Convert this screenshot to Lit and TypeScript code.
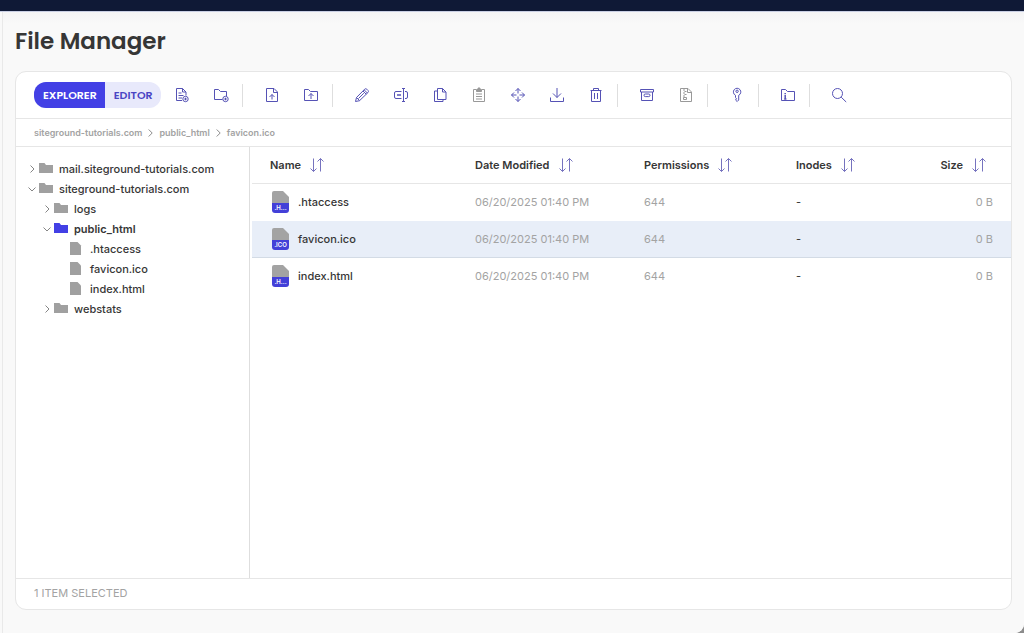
import { LitElement, html, svg, css, nothing } from "lit";
import { customElement, property, state } from "lit/decorators.js";
import { classMap } from "lit/directives/class-map.js";

const PAGE = "M2.500 1.500h7.500l3.500 3.500v9.500h-11zM9.500 1.500v4h4";
const FOLDER = "M1.500 13.500v-11h4l2 2h7v9z";

const ICONS: Record<string, unknown> = {
  newFile: svg`<path d="M8 13.500H2.500v-12h6L12 5v3.500M8.500 1.500V5H12M4.500 6h3M4.500 8.500h5M4.500 11H8"/><circle cx="11.500" cy="12" r="2.700"/><path d="M11.500 10.700v2.600M10.200 12h2.600"/>`,
  newFolder: svg`<path d="M9.500 12.500H1.500v-10h4l2 2h6V9"/><circle cx="12.500" cy="12" r="2.700"/><path d="M12.500 10.700v2.600M11.200 12h2.600"/>`,
  uploadFile: svg`<path d=${PAGE}/><path d="M8 12.500V7.500M5.500 10L8 7.500l2.500 2.500"/>`,
  uploadFolder: svg`<path d=${FOLDER}/><path d="M8 12V6.500M5.500 9L8 6.500 10.500 9"/>`,
  edit: svg`<path d="M1.500 14.500l1-4 8.200-8.300a1.500 1.500 0 0 1 2.100 0l1.200 1.200a1.500 1.500 0 0 1 0 2.100L5.500 13.700zM2.500 10.500l3 3M9 4l3.200 3.200M10.200 2.900l3.100 3.100M4.500 11.500l5.300-5.300"/>`,
  rename: svg`<path d="M8.500 4.500H3A1.500 1.500 0 0 0 1.500 6v4A1.500 1.500 0 0 0 3 11.500h5.500M12 4.500h1A1.500 1.500 0 0 1 14.500 6v4a1.500 1.500 0 0 1-1.500 1.500h-1M10.500 2v12M9 1.500h3M9 14.500h3"/><path stroke-width="1.500" d="M4 8h4"/>`,
  copy: svg`<path d="M5.500 1.500h5l3.500 3.500v7.500H5.500zM10.500 1.500V5H14M5.500 4H2.500v10.500h8.500v-2"/>`,
  paste: svg`<path d="M5 2.500H2.500v12h11v-12H11M5 7h6M5 9.500h6M5 12h6"/><path fill="currentColor" d="M5.500 2.500h1.500V1h2v1.500h1.500v2h-5z"/>`,
  move: svg`<path d="M8 1.500v5M8 9.500v5M1.500 8h5M9.500 8h5M5.500 4L8 1.500 10.500 4M5.500 12L8 14.500l2.500-2.500M4 5.500L1.500 8 4 10.500M12 5.500L14.500 8 12 10.500"/>`,
  download: svg`<path d="M8 1v9.500M4 6.500l4 4 4-4M1.500 10.500v4h13v-4"/>`,
  trash: svg`<path d="M2.500 3.500h11M5.500 3.500v-2h5v2M3.500 3.500v11h9v-11M6.500 6v6M9.500 6v6"/>`,
  archive: svg`<path d="M1.500 2.500h13V5h-13zM2.500 5v8.500h11V5"/><rect x="5" y="7" width="6" height="2.600" rx="1.300"/>`,
  extract: svg`<path d=${PAGE}/><path d="M5 3h2M6.500 4.500h2M5 6h2M6.500 7.500h2M5 9h2M5.500 10.500h3v2h-3z"/>`,
  key: svg`<path d="M6.500 8.300a3.700 3.700 0 1 1 3.200 0V13l-1.500 1.500-1.700-1.500 1-1.200-1-1.300z"/><circle cx="8.100" cy="4.300" r="1.200"/>`,
  info: svg`<path d=${FOLDER}/><path stroke-width="1.500" d="M5.200 6v1.200M5.200 8v4M4.200 12h2.200"/>`,
  search: svg`<circle cx="6.500" cy="6.500" r="5"/><path d="M10.200 10.200l5 4.800"/>`,
};

interface Tool { icon: string; label: string; off?: boolean; }

const TOOLS: Tool[][] = [
  [{ icon: "newFile", label: "New File" }, { icon: "newFolder", label: "New Folder" }],
  [{ icon: "uploadFile", label: "File Upload" }, { icon: "uploadFolder", label: "Folder Upload" }],
  [
    { icon: "edit", label: "Edit" },
    { icon: "rename", label: "Rename" },
    { icon: "copy", label: "Copy" },
    { icon: "paste", label: "Paste", off: true },
    { icon: "move", label: "Move" },
    { icon: "download", label: "Download" },
    { icon: "trash", label: "Delete" },
  ],
  [{ icon: "archive", label: "Archive" }, { icon: "extract", label: "Extract", off: true }],
  [{ icon: "key", label: "Change Permissions" }],
  [{ icon: "info", label: "Directory Info" }],
  [{ icon: "search", label: "Search" }],
];

@customElement("fm-toolbar")
export class FmToolbar extends LitElement {
  @state() private mode = "Explorer";

  static styles = css`
    :host { display: flex; align-items: center; height: 46px; padding-left: 18px; border-bottom: 1px solid #e6e6e6; }
    .modes { display: flex; border-radius: 12px; overflow: hidden; background: #e8e9fb; }
    .mode {
      border: 0; margin: 0; padding: 0 8px 0 9px; height: 26px; background: none; color: #4a45c4;
      font: 600 11px/24px Poppins, Inter, sans-serif; text-transform: uppercase; cursor: pointer;
    }
    .active { background: #4340e5; color: #fff; }
    .group { display: flex; align-items: center; gap: 19px; height: 23px; padding: 0 11px 0 19px; border-left: 1px solid #dedede; }
    .group:nth-of-type(2) { border-left: 0; padding-left: 11px; }
    .tool { display: grid; place-items: center; width: 20px; height: 20px; padding: 0; border: 0; background: none; color: #5552b5; cursor: pointer; }
    .tool:disabled { color: #999; cursor: default; }
    .glyph { width: 16px; height: 16px; fill: none; stroke: currentColor; }
  `;

  render() {
    return html`
      <div class="modes">
        ${["Explorer", "Editor"].map((m) => html`
          <button class=${classMap({ mode: true, active: this.mode === m })} @click=${() => (this.mode = m)}>${m}</button>`)}
      </div>
      ${TOOLS.map((group) => html`
        <div class="group">
          ${group.map((t) => html`
            <button class="tool" aria-label=${t.label} ?disabled=${!!t.off}>
              <svg class="glyph" viewBox="0 0 16 16" aria-hidden="true">${ICONS[t.icon]}</svg>
            </button>`)}
        </div>`)}
    `;
  }
}

interface Node { name: string; depth: number; kind: "folder" | "file"; open?: boolean; current?: boolean; }

const NODES: Node[] = [
  { name: "mail.siteground-tutorials.com", depth: 0, kind: "folder" },
  { name: "siteground-tutorials.com", depth: 0, kind: "folder", open: true },
  { name: "logs", depth: 1, kind: "folder" },
  { name: "public_html", depth: 1, kind: "folder", open: true, current: true },
  { name: ".htaccess", depth: 2, kind: "file" },
  { name: "favicon.ico", depth: 2, kind: "file" },
  { name: "index.html", depth: 2, kind: "file" },
  { name: "webstats", depth: 1, kind: "folder" },
];

@customElement("fm-tree")
export class FmTree extends LitElement {
  static styles = css`
    :host { display: block; border-right: 1px solid #dedede; }
    .list { list-style: none; margin: 0; padding: 12px 0 0 12px; }
    .depth1 { padding-left: 15px; }
    .depth2 { padding-left: 31px; }
    .node {
      display: flex; align-items: center; height: 20px; padding: 0; border: 0; background: none;
      font: 500 11px/20px Inter, sans-serif; color: #363636; white-space: nowrap; cursor: pointer;
    }
    .current { font-weight: 600; }
    .chevron { width: 8px; height: 8px; margin-right: 3px; fill: none; stroke: #858585; }
    .icon { width: 14px; height: 14px; margin-right: 6px; fill: #a0a0a0; }
    .current .icon { fill: #4340e5; }
  `;

  render() {
    return html`
      <ul class="list">
        ${NODES.map((n) => html`
          <li class="depth${n.depth}">
            <button class=${classMap({ node: true, current: !!n.current })}>
              <svg class="chevron" viewBox="0 0 8 8" aria-hidden="true">
                ${n.kind === "file" ? nothing : n.open
                  ? svg`<path d="M0.500 2.500L4 6l3.500-3.500"/>`
                  : svg`<path d="M2.500 0.500L6 4 2.500 7.500"/>`}
              </svg>
              <svg class="icon" viewBox="0 0 14 14" aria-hidden="true">
                ${n.kind === "file"
                  ? svg`<path d="M0 0h7.500L11 3.500V13H0z"/>`
                  : svg`<path d="M0 11V1h5.500l1.500 2h7v8z"/>`}
              </svg>
              <span>${n.name}</span>
            </button>
          </li>`)}
      </ul>
    `;
  }
}

interface Entry { name: string; badge: string; }

const ENTRIES: Entry[] = [
  { name: ".htaccess", badge: ".H..." },
  { name: "favicon.ico", badge: ".ICO" },
  { name: "index.html", badge: ".H..." },
];

const COLUMNS = ["Name", "Date Modified", "Permissions", "Inodes", "Size"];

@customElement("fm-files")
export class FmFiles extends LitElement {
  @property() selected = "favicon.ico";

  static styles = css`
    :host { display: block; padding-left: 2px; }
    .table { width: 100%; table-layout: fixed; border-collapse: separate; border-spacing: 0; font: 400 11px/16px Inter, sans-serif; }
    .col-name { width: 205px; }
    .col-date { width: 169px; }
    .col-perm { width: 152px; }
    .col-inodes { width: 110px; }
    .col-size { width: 123px; }
    th, td { height: 36px; padding: 0 0 0 18px; text-align: left; white-space: nowrap; border-bottom: 1px solid transparent; }
    th { height: 34px; padding-bottom: 2px; border-bottom-color: #e6e6e6; }
    th:last-child, td:last-child { text-align: right; padding-left: 0; padding-right: 18px; }
    td { color: #a3a3a3; }
    .sort { display: inline-flex; align-items: center; gap: 2px; padding: 0; border: 0; background: none; font: 600 11px/16px Inter, sans-serif; color: #363636; cursor: pointer; vertical-align: middle; }
    .arrows { width: 28px; height: 14px; fill: none; stroke: #7673bf; }
    .selected td { background: #e8eef8; border-bottom-color: #d3dbe5; }
    .name { display: flex; align-items: center; gap: 9px; padding-left: 2px; font-weight: 500; color: #363636; }
    .dash { color: #363636; }
    .badge {
      display: flex; align-items: flex-end; justify-content: center; width: 17px; height: 22px; border-radius: 2px 0 3px 3px;
      background: linear-gradient(#a3a3a3 12px, #4340d8 12px); clip-path: polygon(0 0, 11px 0, 100% 6px, 100% 100%, 0 100%);
      font: 600 6px/10px Inter, sans-serif; color: #fff;
    }
  `;

  render() {
    return html`
      <table class="table">
        <colgroup>
          <col class="col-name" /><col class="col-date" /><col class="col-perm" /><col class="col-inodes" /><col class="col-size" />
        </colgroup>
        <thead>
          <tr>
            ${COLUMNS.map((c) => html`
              <th scope="col">
                <button class="sort">${c}
                  <svg class="arrows" viewBox="0 0 28 14" aria-hidden="true">
                    <path d="M10.500 0.500v13M7.500 10.500l3 3 3-3M17.500 13.500V0.500M14.500 3.500l3-3 3 3" />
                  </svg>
                </button>
              </th>`)}
          </tr>
        </thead>
        <tbody>
          ${ENTRIES.map((e) => html`
            <tr class=${classMap({ selected: e.name === this.selected })} @click=${() => (this.selected = e.name)}>
              <td><div class="name"><span class="badge">${e.badge}</span>${e.name}</div></td>
              <td>06/20/2025 01:40 PM</td>
              <td>644</td>
              <td><span class="dash">-</span></td>
              <td>0 B</td>
            </tr>`)}
        </tbody>
      </table>
    `;
  }
}

@customElement("app-root")
export class AppRoot extends LitElement {
  static styles = css`
    :host { display: flex; height: 100vh; background: #8c8c8c; font-family: Inter, sans-serif; color: #363636; }
    .shell { flex: 1; display: flex; flex-direction: column; min-width: 0; overflow: hidden; border-radius: 0 0 9px 0; background: #f9f9f9; }
    .topbar { height: 11px; background: #0f1936; border-bottom: 1px solid #c9cfe4; }
    .page {
      flex: 1; display: flex; flex-direction: column; min-height: 0; margin-left: 2px; padding: 12px 12px 23px;
      border-left: 1px solid #e9e9e9; background: linear-gradient(#f4f4f5, #f9f9f9 12px);
    }
    .title { margin: 0 0 13px; font: 600 23px/34px Poppins, Inter, sans-serif; }
    .card { flex: 1; display: flex; flex-direction: column; min-height: 0; overflow: hidden; border: 1px solid #e6e6e6; border-radius: 11px; background: #fff; }
    .crumbs { display: flex; align-items: center; gap: 6px; height: 27px; padding-left: 18px; border-bottom: 1px solid #e6e6e6; }
    .crumb { font: 600 9px/14px Inter, sans-serif; color: #a3a3a3; text-decoration: none; }
    .next { width: 5px; height: 8px; fill: none; stroke: #8c8c8c; }
    .body { flex: 1; display: grid; grid-template-columns: 234px 1fr; min-height: 0; }
    .status { height: 30px; padding-left: 18px; border-top: 1px solid #e6e6e6; font: 400 11px/28px Inter, sans-serif; color: #a3a3a3; text-transform: uppercase; }
  `;

  render() {
    const path = ["siteground-tutorials.com", "public_html", "favicon.ico"];
    return html`
      <div class="shell">
        <div class="topbar"></div>
        <main class="page">
          <h1 class="title">File Manager</h1>
          <section class="card">
            <fm-toolbar></fm-toolbar>
            <nav class="crumbs" aria-label="Path">
              ${path.map((p, i) => html`
                ${i ? html`<svg class="next" viewBox="0 0 5 8" aria-hidden="true"><path d="M0.700 0.500L4.200 4 0.700 7.500" /></svg>` : nothing}
                <a class="crumb" href="#">${p}</a>`)}
            </nav>
            <div class="body">
              <fm-tree></fm-tree>
              <fm-files></fm-files>
            </div>
            <footer class="status">1 item selected</footer>
          </section>
        </main>
      </div>
    `;
  }
}
